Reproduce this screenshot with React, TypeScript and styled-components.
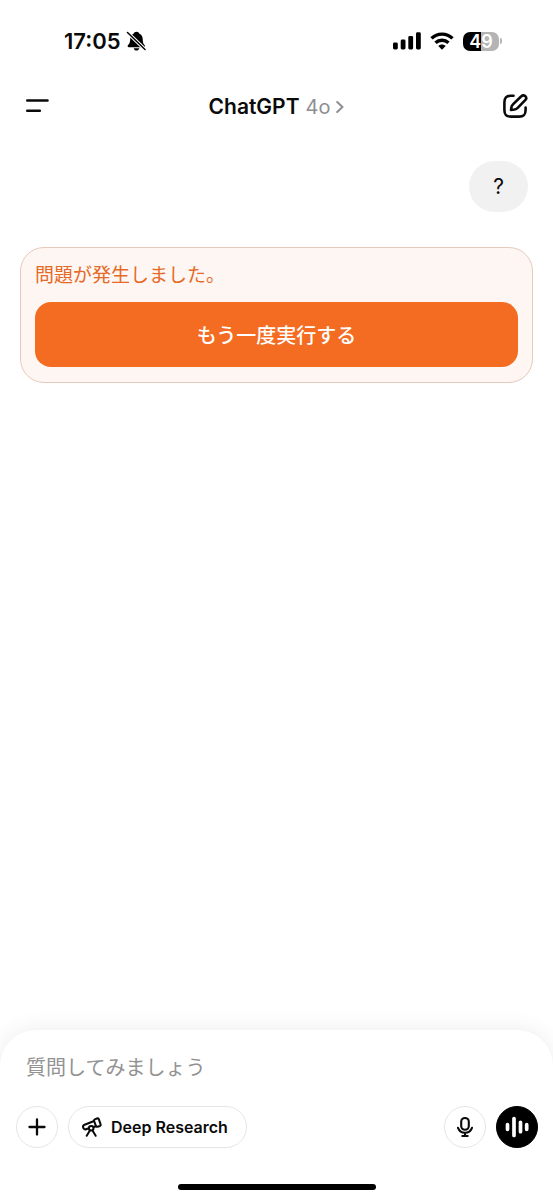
import React from "react";
import styled, { createGlobalStyle } from "styled-components";

const GlobalStyle = createGlobalStyle`
  *, *::before, *::after { box-sizing: border-box; }
  body {
    margin: 0;
    background: #fff;
    color: #0a0a0a;
    font-family: Inter, "Noto Sans CJK JP", sans-serif;
  }
  button, input { font: inherit; color: inherit; }
  svg { display: block; flex: none; }
`;

const Screen = styled.div`
  display: flex;
  flex-direction: column;
  min-height: 100vh;
  overflow: hidden;
`;

const StatusBar = styled.div`
  display: flex;
  align-items: center;
  justify-content: space-between;
  height: 82px;
  padding: 0 51px 0 64px;
`;

const StatusGroup = styled.div<{ $gap: number }>`
  display: flex;
  align-items: center;
  gap: ${({ $gap }) => $gap}px;
`;

const Time = styled.time`
  font-size: 22px;
  line-height: 28px;
  font-weight: 600;
`;

const Battery = styled.div`
  display: flex;
  align-items: center;
  gap: 1px;
`;

const BatteryLevel = styled.div`
  width: 36px;
  height: 19px;
  border-radius: 7px;
  background: linear-gradient(to right, #000 49%, #b4b4b4 49%);
  color: #fff;
  font-size: 18px;
  line-height: 19px;
  font-weight: 600;
  text-align: center;
`;

const BatteryTip = styled.div`
  width: 2px;
  height: 6px;
  border-radius: 0 2px 2px 0;
  background: #b4b4b4;
`;

const Header = styled.header`
  display: grid;
  grid-template-columns: 1fr auto 1fr;
  align-items: center;
  height: 48px;
  padding: 0 25px;
`;

const IconButton = styled.button<{ $end?: boolean }>`
  justify-self: ${({ $end }) => ($end ? "end" : "start")};
  padding: 0;
  border: 0;
  background: none;
`;

const ModelButton = styled.button`
  display: flex;
  align-items: center;
  gap: 6px;
  padding: 1px 0 0;
  border: 0;
  background: none;
  font-size: 21px;
  line-height: 28px;
  font-weight: 600;
`;

const ModelName = styled.span`
  color: #8e8e93;
  font-size: 20px;
  font-weight: 400;
`;

const Conversation = styled.main`
  display: flex;
  flex: 1;
  flex-direction: column;
  gap: 35px;
  padding: 31px 20px;
`;

const UserMessage = styled.div`
  align-self: flex-end;
  margin-right: 5px;
  padding: 12px 24px;
  border-radius: 26px;
  background: #f1f1f1;
  font-size: 21px;
  line-height: 27px;
`;

const ErrorCard = styled.section`
  display: flex;
  flex-direction: column;
  gap: 12px;
  padding: 14px 14px 15px;
  border: 1px solid #e6cabd;
  border-radius: 24px;
  background: #fef6f2;
`;

const ErrorText = styled.p`
  margin: 0;
  color: #e56a28;
  font-size: 19px;
  line-height: 28px;
`;

const RetryButton = styled.button`
  height: 65px;
  border: 0;
  border-radius: 16px;
  background: #f46c22;
  color: #fff;
  font-size: 20px;
  font-weight: 500;
`;

const Composer = styled.form`
  padding: 20px 15px 10px 16px;
  border-radius: 36px 36px 0 0;
  background: #fff;
  box-shadow: 0 0 24px rgba(0, 0, 0, 0.08);
`;

const Prompt = styled.input`
  display: block;
  width: 100%;
  height: 36px;
  padding: 0 10px;
  border: 0;
  outline: 0;
  background: none;
  font-size: 20px;
  &::placeholder { color: #929292; opacity: 1; }
`;

const Tools = styled.div`
  display: flex;
  align-items: center;
  gap: 10px;
  margin-top: 20px;
`;

const RoundButton = styled.button<{ $filled?: boolean }>`
  display: grid;
  place-items: center;
  width: 42px;
  height: 42px;
  padding: 0;
  border: 1px solid ${({ $filled }) => ($filled ? "#000" : "#e6e6e6")};
  border-radius: 50%;
  background: ${({ $filled }) => ($filled ? "#000" : "#fff")};
`;

const ResearchButton = styled.button`
  display: flex;
  align-items: center;
  gap: 8px;
  height: 42px;
  margin-right: auto;
  padding: 0 18px 0 12px;
  border: 1px solid #e6e6e6;
  border-radius: 21px;
  background: #fff;
  font-size: 16px;
  font-weight: 600;
`;

const HomeIndicator = styled.div`
  width: 198px;
  height: 6px;
  margin: 36px auto 0;
  border-radius: 3px;
  background: #000;
`;

const BellOff = () => (
  <svg width="20" height="20" viewBox="0 0 20 20" aria-hidden="true">
    <path d="M10.500 .8C9 .8 8.100 1.500 7.800 2.500C5.300 3.400 4.300 5.500 4.200 8.200C4 12 3.200 12.700 1.900 14.300C1.200 15.200 1.700 16.200 2.800 16.200H17.800C18.900 16.200 19.400 15.200 18.700 14.300C17.500 12.700 16.900 12 16.700 8.200C16.600 5.500 15.600 3.400 13.200 2.500C12.900 1.500 12 .8 10.500 .8Z" />
    <path d="M7.700 17.200H13.300C12.900 18.700 11.900 19.500 10.500 19.500S8.100 18.700 7.700 17.200Z" />
    <path d="M1.500 1.500L19 18.500" stroke="#fff" strokeWidth="3.400" />
    <path d="M1.500 1.500L19 18.500" stroke="#000" strokeWidth="1.500" strokeLinecap="round" />
  </svg>
);

const Signal = () => (
  <svg width="28" height="18" viewBox="0 0 28 18" aria-hidden="true">
    <rect x="0" y="10.500" width="4.800" height="7" rx="1.400" />
    <rect x="7.700" y="7.500" width="4.800" height="10" rx="1.400" />
    <rect x="15.300" y="4" width="4.800" height="13.500" rx="1.400" />
    <rect x="23" y="0.300" width="4.800" height="17.200" rx="1.400" />
  </svg>
);

const Wifi = () => (
  <svg width="24" height="18" viewBox="0 0 24 18" fill="none" stroke="#000" strokeWidth="3.400" aria-hidden="true">
    <path d="M1.500 6.400C7.300.700 16.700.700 22.500 6.400" />
    <path d="M5.500 10.800C9.200 7.400 14.800 7.400 18.500 10.800" />
    <path d="M12 17.700L8.300 14C10.500 12 13.500 12 15.700 14Z" fill="#000" stroke="none" />
  </svg>
);

const Menu = () => (
  <svg width="25" height="24" viewBox="0 0 25 24" stroke="#0a0a0a" strokeWidth="2.600" strokeLinecap="round" aria-hidden="true">
    <path d="M2.300 6.500H22.500M2.300 16.700H14.800" />
  </svg>
);

const Chevron = () => (
  <svg width="8" height="14" viewBox="0 0 8 14" fill="none" stroke="#8e8e93" strokeWidth="2" strokeLinecap="round" strokeLinejoin="round" aria-hidden="true">
    <path d="M1.200 2L6.500 7L1.200 12" />
  </svg>
);

const Compose = () => (
  <svg width="26" height="26" viewBox="0 0 26 26" fill="none" stroke="#0a0a0a" strokeWidth="2.600" strokeLinecap="round" strokeLinejoin="round" aria-hidden="true">
    <path d="M11.500 2.800H9C4.200 2.800 2.400 4.700 2.400 9.500V17C2.400 21.800 4.200 23.600 9 23.600H17C21.800 23.600 23.600 21.800 23.600 17V14.500" />
    <path d="M19.300 3.300C20.500 2.100 22.200 2.100 23.300 3.200C24.400 4.300 24.400 6 23.200 7.200L15.700 14.800C14.800 15.700 13.700 16.300 12.500 16.500L9 17L9.600 13.600C9.800 12.500 10.400 11.900 11.200 11.100Z" />
  </svg>
);

const Plus = () => (
  <svg width="20" height="20" viewBox="0 0 20 20" stroke="#0a0a0a" strokeWidth="2.300" strokeLinecap="round" aria-hidden="true">
    <path d="M10 2.500V17.500M2.500 10H17.500" />
  </svg>
);

const Telescope = () => (
  <svg width="22" height="22" viewBox="0 0 22 22" fill="none" stroke="#0a0a0a" strokeWidth="2" strokeLinecap="round" strokeLinejoin="round" aria-hidden="true">
    <path d="M13.800 3.400L16 2.500C16.800 2.200 17.500 2.500 17.800 3.200L19.600 8.300C19.900 9.100 19.600 9.700 18.900 10L16.600 10.700C15.800 11 15.200 10.700 14.900 9.900L13.100 5C12.900 4.300 13.100 3.700 13.800 3.400Z" />
    <path d="M13.100 5L3.600 8.700C2.200 9.300 1.700 10.400 2.200 11.700C2.700 13.100 3.800 13.700 5.100 13.200L7.700 12.300M12.600 11L15 10.200" />
    <circle cx="10.200" cy="12.200" r="2.300" />
    <path d="M8.900 14.400L5.700 19.800M11.500 14.400L14.700 19.800" />
  </svg>
);

const Mic = () => (
  <svg width="20" height="22" viewBox="0 0 20 22" fill="none" stroke="#0a0a0a" strokeWidth="2.100" strokeLinecap="round" aria-hidden="true">
    <rect x="6.200" y="2" width="7.600" height="11.800" rx="3.800" />
    <path d="M3 11.800C4.200 15 6.700 16.700 10 16.700S15.800 15 17 11.800M10 16.700V19.800M7.300 20H12.700" />
  </svg>
);

const Voice = () => (
  <svg width="26" height="22" viewBox="0 0 26 22" stroke="#fff" strokeWidth="3.700" strokeLinecap="round" aria-hidden="true">
    <path d="M3.500 8.700V13.300M10 2.600V19.400M16.500 6.300V15.700M22.700 8.700V13.300" />
  </svg>
);

export default function App() {
  return (
    <Screen>
      <GlobalStyle />
      <StatusBar>
        <StatusGroup $gap={5}>
          <Time>17:05</Time>
          <BellOff />
        </StatusGroup>
        <StatusGroup $gap={9}>
          <Signal />
          <Wifi />
          <Battery>
            <BatteryLevel>49</BatteryLevel>
            <BatteryTip />
          </Battery>
        </StatusGroup>
      </StatusBar>
      <Header>
        <IconButton type="button" aria-label="メニュー">
          <Menu />
        </IconButton>
        <ModelButton type="button">
          ChatGPT <ModelName>4o</ModelName>
          <Chevron />
        </ModelButton>
        <IconButton type="button" $end aria-label="新しいチャット">
          <Compose />
        </IconButton>
      </Header>
      <Conversation>
        <UserMessage>?</UserMessage>
        <ErrorCard role="alert">
          <ErrorText>問題が発生しました。</ErrorText>
          <RetryButton type="button">もう一度実行する</RetryButton>
        </ErrorCard>
      </Conversation>
      <Composer onSubmit={(event) => event.preventDefault()}>
        <Prompt type="text" aria-label="質問" placeholder="質問してみましょう" />
        <Tools>
          <RoundButton type="button" aria-label="追加">
            <Plus />
          </RoundButton>
          <ResearchButton type="button">
            <Telescope />
            Deep Research
          </ResearchButton>
          <RoundButton type="button" aria-label="音声入力">
            <Mic />
          </RoundButton>
          <RoundButton type="button" $filled aria-label="音声モード">
            <Voice />
          </RoundButton>
        </Tools>
        <HomeIndicator />
      </Composer>
    </Screen>
  );
}
